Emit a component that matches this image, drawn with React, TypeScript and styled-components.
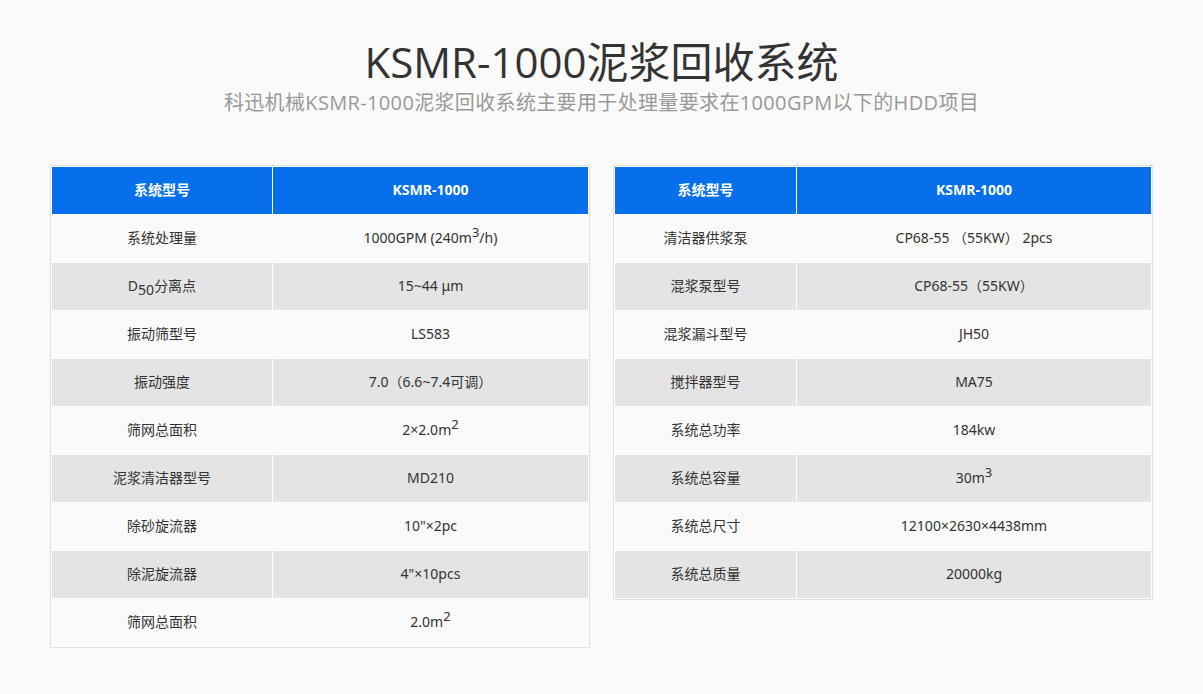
import React from "react";
import styled, { createGlobalStyle } from "styled-components";

const Global = createGlobalStyle`
  html, body { margin: 0; padding: 0; background: #fafafa; }
  body { font-family: "Noto Sans", "Noto Sans CJK SC", sans-serif; color: #333; }
`;

const Page = styled.div`
  width: 1103px;
  margin: 0 auto;
  padding-top: 37px;
`;

const Title = styled.h1`
  margin: 0;
  text-align: center;
  font-size: 42px;
  line-height: 50px;
  font-weight: 400;
  color: #333;
  font-family: "Open Sans", "Noto Sans CJK SC", sans-serif;
`;

const Subtitle = styled.p`
  margin: 2px 0 0;
  text-align: center;
  font-size: 20px;
  letter-spacing: 0.35px;
  line-height: 28px;
  color: #999;
  font-family: "Open Sans", "Noto Sans CJK SC", sans-serif;
`;

const Columns = styled.div`
  display: flex;
  justify-content: space-between;
  align-items: flex-start;
  margin-top: 48px;
`;

const Table = styled.table`
  width: 540px;
  border: 1px solid #e0e0e0;
  border-collapse: separate;
  border-spacing: 1px;
  background: #fff;
  font-size: 14px;
  table-layout: fixed;
`;

const HeadCell = styled.th<{ $w?: number }>`
  background: #066fe9;
  color: #fff;
  font-weight: 700;
  height: 47px;
  padding: 0 0 3px;
  box-sizing: border-box;
  text-align: center;
  ${(p) => (p.$w ? `width: ${p.$w}px;` : "")}
`;

const Row = styled.tr<{ $alt: boolean }>`
  background: ${(p) => (p.$alt ? "#e4e4e4" : "#fafafa")};
`;

const Cell = styled.td`
  height: 47px;
  box-sizing: border-box;
  padding: 0 0 2px;
  text-align: center;
  color: #333;
  line-height: 20px;
`;

const Sup = styled.sup`
  font-size: 13px;
  line-height: 0;
  vertical-align: 6px;
`;

const Sub = styled.sub`
  font-size: 14px;
  line-height: 0;
  vertical-align: -4px;
`;

type Item = [React.ReactNode, React.ReactNode];

const left: Item[] = [
  ["系统处理量", <>1000GPM (240m<Sup>3</Sup>/h)</>],
  [<>D<Sub>50</Sub>分离点</>, "15~44 μm"],
  ["振动筛型号", "LS583"],
  ["振动强度", "7.0（6.6~7.4可调）"],
  ["筛网总面积", <>2×2.0m<Sup>2</Sup></>],
  ["泥浆清洁器型号", "MD210"],
  ["除砂旋流器", "10\"×2pc"],
  ["除泥旋流器", "4\"×10pcs"],
  ["筛网总面积", <>2.0m<Sup>2</Sup></>],
];

const right: Item[] = [
  ["清洁器供浆泵", "CP68-55 （55KW） 2pcs"],
  ["混浆泵型号", "CP68-55（55KW）"],
  ["混浆漏斗型号", "JH50"],
  ["搅拌器型号", "MA75"],
  ["系统总功率", "184kw"],
  ["系统总容量", <>30m<Sup>3</Sup></>],
  ["系统总尺寸", "12100×2630×4438mm"],
  ["系统总质量", "20000kg"],
];

const Spec = ({ items, w }: { items: Item[]; w: number }) => (
  <Table>
    <thead>
      <tr>
        <HeadCell $w={w}>系统型号</HeadCell>
        <HeadCell>KSMR-1000</HeadCell>
      </tr>
    </thead>
    <tbody>
      {items.map((it, i) => (
        <Row key={i} $alt={i % 2 === 1}>
          <Cell>{it[0]}</Cell>
          <Cell>{it[1]}</Cell>
        </Row>
      ))}
    </tbody>
  </Table>
);

export default function App() {
  return (
    <>
      <Global />
      <Page>
        <Title>KSMR-1000泥浆回收系统</Title>
        <Subtitle>科迅机械KSMR-1000泥浆回收系统主要用于处理量要求在1000GPM以下的HDD项目</Subtitle>
        <Columns>
          <Spec items={left} w={220} />
          <Spec items={right} w={181} />
        </Columns>
      </Page>
    </>
  );
}
